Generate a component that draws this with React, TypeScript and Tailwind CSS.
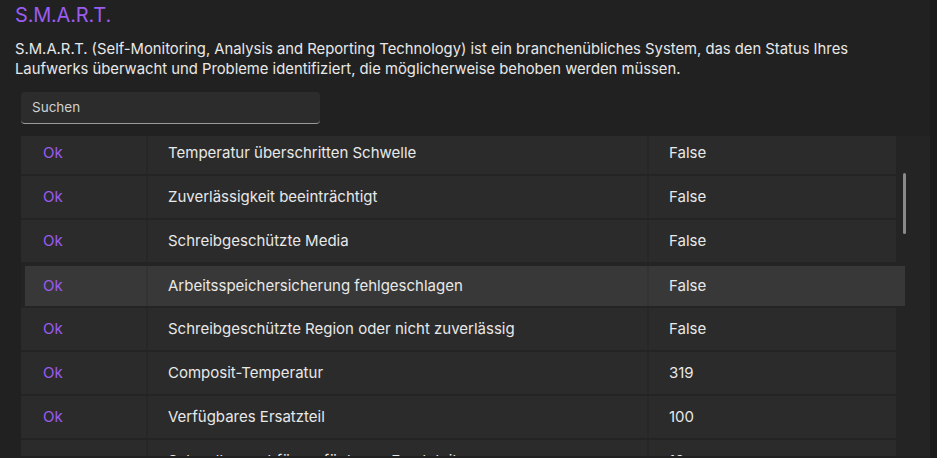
import React from "react";

const rows: { name: string; value: string; status: string }[] = [
  { name: "Temperatur überschritten Schwelle", value: "False", status: "Ok" },
  { name: "Zuverlässigkeit beeinträchtigt", value: "False", status: "Ok" },
  { name: "Schreibgeschützte Media", value: "False", status: "Ok" },
  { name: "Arbeitsspeichersicherung fehlgeschlagen", value: "False", status: "Ok" },
  { name: "Schreibgeschützte Region oder nicht zuverlässig", value: "False", status: "Ok" },
  { name: "Composit-Temperatur", value: "319", status: "Ok" },
  { name: "Verfügbares Ersatzteil", value: "100", status: "Ok" },
  { name: "Schwellenwert für verfügbares Ersatzteil", value: "10", status: "" },
];

export default function App() {
  return (
    <div className="w-[937px] h-[458px] overflow-hidden bg-[#212121] flex font-['Inter',sans-serif] text-[#e8e8e8]">
      <div className="flex-1 flex flex-col min-w-0 pb-[2px]">
        <h1 className="pl-[15px] pt-[1px] text-[20px] leading-[28px] text-[#9b5cf0] tracking-[-0.2px]">
          S.M.A.R.T.
        </h1>
        <p className="pl-[15px] pt-[10px] text-[14.8px] leading-[20px] pr-[40px]">
          S.M.A.R.T. (Self-Monitoring, Analysis and Reporting Technology) ist ein branchenübliches System, das den Status Ihres
          Laufwerks überwacht und Probleme identifiziert, die möglicherweise behoben werden müssen.
        </p>
        <div className="ml-[21px] mt-[13px] w-[299px] h-[32px] shrink-0 rounded-[4px] bg-[#2c2c2c] border-b border-[#9a9a9a] flex items-center pl-[11px] text-[13.5px] text-[#d0d0d0]">
          Suchen
        </div>
        <div className="ml-[21px] mt-[12px] flex-1 bg-[#242424] relative overflow-hidden">
          <div className="flex flex-col gap-[2px] mt-[-4px]">
            {rows.map((r, i) => {
              const hl = i === 3;
              const cell = hl ? "bg-[#383838]" : "bg-[#2b2b2b]";
              return (
                <div
                  key={i}
                  className={
                    hl
                      ? "grid grid-cols-[121px_499px_256px] gap-[2px] w-[880px] h-[40px] mt-[2px] ml-[4px] bg-[#333333] text-[15px] shrink-0"
                      : "grid grid-cols-[125px_499px_247px] gap-[2px] w-[875px] h-[42px] bg-[#272727] text-[15px] shrink-0"
                  }
                >
                  <div className={`${cell} ${hl ? "pl-[18px]" : "pl-[22px]"} flex items-center text-[#9b5cf0]`}>
                    {r.status}
                  </div>
                  <div className={`${cell} flex items-center pl-[20px] whitespace-nowrap`}>
                    {r.name}
                  </div>
                  <div className={`${cell} flex items-center pl-[20px]`}>
                    {r.value}
                  </div>
                </div>
              );
            })}
          </div>
          <div className="absolute left-[882px] top-[37px] w-[3px] h-[61px] rounded-full bg-[#8a8a8a]" />
        </div>
      </div>
      <div className="w-[7px] bg-[#1a1a1a]" />
    </div>
  );
}
